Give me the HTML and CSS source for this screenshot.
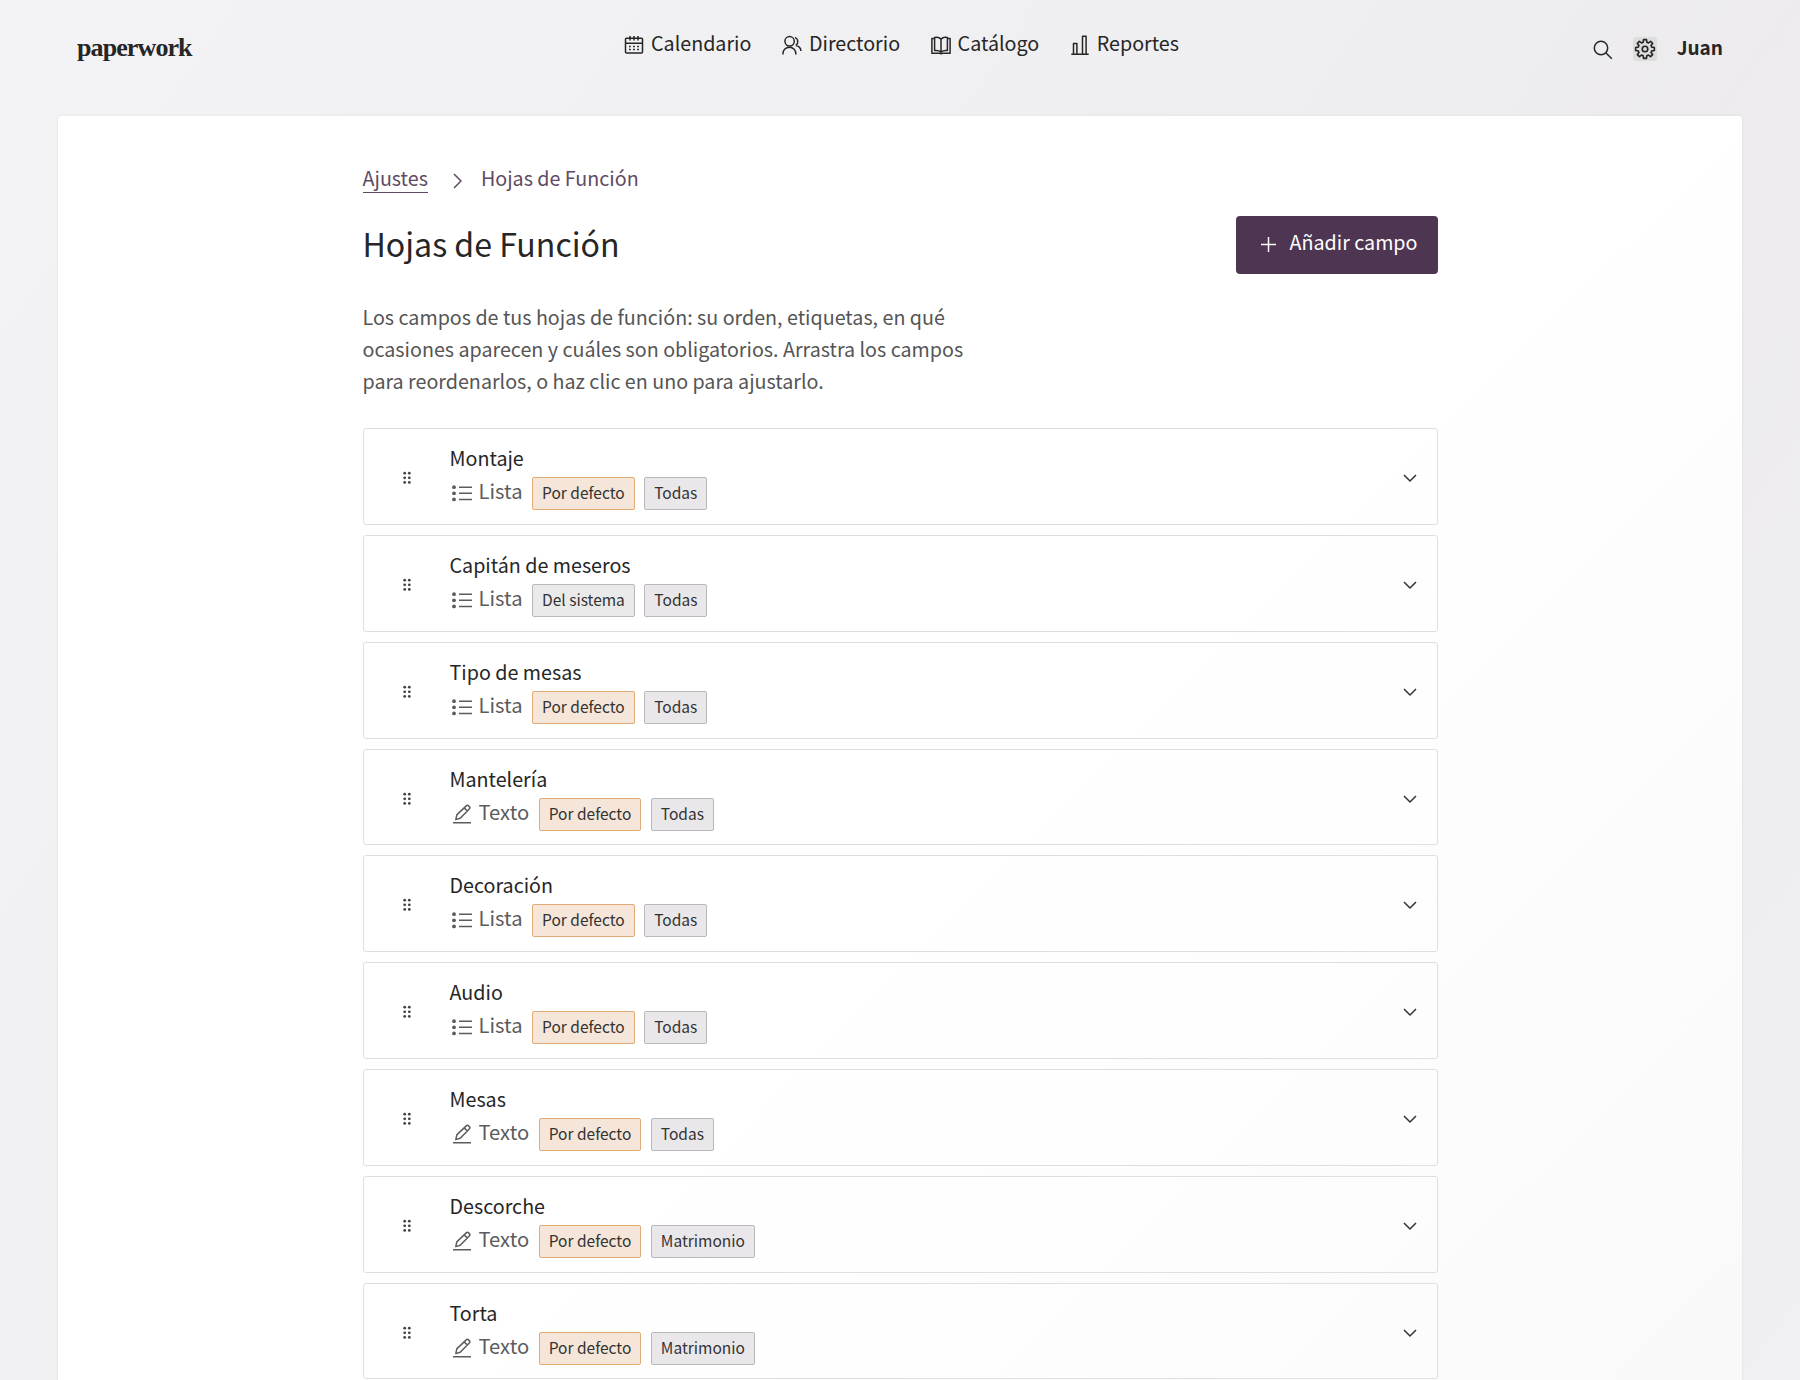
FILE: index.html
```html
<!DOCTYPE html>
<html lang="es">
<head>
    <meta charset="UTF-8">
    <meta name="viewport" content="width=device-width, initial-scale=1.0">
    <title>Hojas de Función - paperwork</title>
    <link rel="stylesheet" href="styles.css">
</head>
<body>

<svg class="sprite" xmlns="http://www.w3.org/2000/svg">
    <symbol id="i-calendar" viewBox="0 0 20 20">
        <rect x="1.5" y="3.2" width="17" height="14.8" rx="1"/>
        <path d="M1.5 8.3h17M6 1v4.4M10 1v4.4M14 1v4.4"/>
        <path d="M5 11.4h1.8M9.1 11.4h1.8M13.2 11.4H15M5 14.6h1.8M9.1 14.6h1.8M13.2 14.6H15"/>
    </symbol>
    <symbol id="i-users" viewBox="0 0 20 20">
        <circle cx="7.6" cy="6.3" r="4.7"/>
        <path d="M1 19.4v-.8a6.3 6.3 0 0 1 12.8 0v.8M13 2.4a4.4 4.4 0 0 1 .8 7.8M13.8 10.4c2.8.4 4.9 2.4 5.2 5.6"/>
    </symbol>
    <symbol id="i-book" viewBox="0 0 20 20">
        <path d="M3.6 3.4H.9V18.3H8.7L10 18.9l1.3-.6H19.1V3.4H16.4"/>
        <path d="M10 4.3C8.4 2.3 6 2 3.6 2.6V15.6c2.4-.4 4.7 0 6.4 1.5 1.7-1.5 4-1.9 6.4-1.5V2.6C14 2 11.6 2.3 10 4.3zM10 4.3v12.8"/>
    </symbol>
    <symbol id="i-chart" viewBox="0 0 20 20">
        <path d="M1.3 19.2h17.4M3.5 19.2V8.6h3.4v10.6M12.5 19.2V1.2h3.6v18"/>
    </symbol>
    <symbol id="i-search" viewBox="0 0 20 20">
        <circle cx="8" cy="8" r="6.7"/>
        <path d="M12.8 12.8l6 6"/>
    </symbol>
    <symbol id="i-gear" viewBox="0 0 24 24">
        <path d="M10 4.6 10.4 1.8h3.2L14 4.6l1.800.8 2.300-1.7 2.200 2.200-1.700 2.300.8 1.800 2.800.4v3.200l-2.800.4-.8 1.800 1.700 2.300-2.200 2.200-2.300-1.700-1.800.8-.4 2.800h-3.200L10 19.400l-1.800-.8-2.300 1.700-2.200-2.200 1.700-2.300L4.600 14l-2.800-.4v-3.200L4.600 10l.8-1.800-1.700-2.300 2.200-2.200 2.300 1.700z"/>
        <circle cx="12" cy="12" r="3"/>
    </symbol>
    <symbol id="i-list" viewBox="0 0 20 18">
        <path d="M7 3.2h13M7 9.3h13M7 15.4h13"/>
        <g class="dots"><circle cx="2" cy="3.2" r="1.9"/><circle cx="2" cy="9.3" r="1.9"/><circle cx="2" cy="15.4" r="1.9"/></g>
    </symbol>
    <symbol id="i-pen" viewBox="0 0 20 20">
        <path d="M1 18.8h18M3.8 15.6l1-4.7L14.2 1.9a1.7 1.7 0 0 1 2.4 0l.7.7a1.7 1.7 0 0 1 0 2.4L8.2 14.3zM12.2 3.9l3.1 3.1"/>
    </symbol>
    <symbol id="i-grip" viewBox="0 0 8 14">
        <g class="dots"><circle cx="1.7" cy="2.2" r="1.4"/><circle cx="6.3" cy="2.2" r="1.4"/><circle cx="1.7" cy="6.8" r="1.4"/><circle cx="6.3" cy="6.8" r="1.4"/><circle cx="1.7" cy="11.4" r="1.4"/><circle cx="6.3" cy="11.4" r="1.4"/></g>
    </symbol>
    <symbol id="i-down" viewBox="0 0 14 8">
        <path d="M1 1l6 6 6-6"/>
    </symbol>
</svg>

<header class="topbar">
    <a class="logo">paperwork</a>
    <nav class="nav">
        <a><svg><use href="#i-calendar"/></svg><span>Calendario</span></a>
        <a><svg><use href="#i-users"/></svg><span>Directorio</span></a>
        <a><svg><use href="#i-book"/></svg><span>Catálogo</span></a>
        <a><svg><use href="#i-chart"/></svg><span>Reportes</span></a>
    </nav>
    <div class="account">
        <svg class="search"><use href="#i-search"/></svg>
        <span class="settings"><svg><use href="#i-gear"/></svg></span>
        <span class="user">Juan</span>
    </div>
</header>

<main class="sheet">
    <div class="content">
        <div class="breadcrumb">
            <a>Ajustes</a>
            <svg viewBox="0 0 9 16"><path d="M1 1l7 7-7 7"/></svg>
            <span>Hojas de Función</span>
        </div>

        <div class="heading">
            <h1>Hojas de Función</h1>
            <button class="add"><svg viewBox="0 0 15 15"><path d="M7.5 0v15M0 7.5h15"/></svg><span>Añadir campo</span></button>
        </div>

        <p class="intro">Los campos de tus hojas de función: su orden, etiquetas, en qué<br>ocasiones aparecen y cuáles son obligatorios. Arrastra los campos<br>para reordenarlos, o haz clic en uno para ajustarlo.</p>

        <div class="fields">
            <div class="field">
                <svg class="grip"><use href="#i-grip"/></svg>
                <div class="info">
                    <div class="name">Montaje</div>
                    <div class="meta"><svg class="list"><use href="#i-list"/></svg><span class="type">Lista</span><span class="tag default">Por defecto</span><span class="tag">Todas</span></div>
                </div>
                <svg class="down"><use href="#i-down"/></svg>
            </div>
            <div class="field">
                <svg class="grip"><use href="#i-grip"/></svg>
                <div class="info">
                    <div class="name">Capitán de meseros</div>
                    <div class="meta"><svg class="list"><use href="#i-list"/></svg><span class="type">Lista</span><span class="tag system">Del sistema</span><span class="tag">Todas</span></div>
                </div>
                <svg class="down"><use href="#i-down"/></svg>
            </div>
            <div class="field">
                <svg class="grip"><use href="#i-grip"/></svg>
                <div class="info">
                    <div class="name">Tipo de mesas</div>
                    <div class="meta"><svg class="list"><use href="#i-list"/></svg><span class="type">Lista</span><span class="tag default">Por defecto</span><span class="tag">Todas</span></div>
                </div>
                <svg class="down"><use href="#i-down"/></svg>
            </div>
            <div class="field">
                <svg class="grip"><use href="#i-grip"/></svg>
                <div class="info">
                    <div class="name">Mantelería</div>
                    <div class="meta"><svg class="pen"><use href="#i-pen"/></svg><span class="type">Texto</span><span class="tag default">Por defecto</span><span class="tag">Todas</span></div>
                </div>
                <svg class="down"><use href="#i-down"/></svg>
            </div>
            <div class="field">
                <svg class="grip"><use href="#i-grip"/></svg>
                <div class="info">
                    <div class="name">Decoración</div>
                    <div class="meta"><svg class="list"><use href="#i-list"/></svg><span class="type">Lista</span><span class="tag default">Por defecto</span><span class="tag">Todas</span></div>
                </div>
                <svg class="down"><use href="#i-down"/></svg>
            </div>
            <div class="field">
                <svg class="grip"><use href="#i-grip"/></svg>
                <div class="info">
                    <div class="name">Audio</div>
                    <div class="meta"><svg class="list"><use href="#i-list"/></svg><span class="type">Lista</span><span class="tag default">Por defecto</span><span class="tag">Todas</span></div>
                </div>
                <svg class="down"><use href="#i-down"/></svg>
            </div>
            <div class="field">
                <svg class="grip"><use href="#i-grip"/></svg>
                <div class="info">
                    <div class="name">Mesas</div>
                    <div class="meta"><svg class="pen"><use href="#i-pen"/></svg><span class="type">Texto</span><span class="tag default">Por defecto</span><span class="tag">Todas</span></div>
                </div>
                <svg class="down"><use href="#i-down"/></svg>
            </div>
            <div class="field">
                <svg class="grip"><use href="#i-grip"/></svg>
                <div class="info">
                    <div class="name">Descorche</div>
                    <div class="meta"><svg class="pen"><use href="#i-pen"/></svg><span class="type">Texto</span><span class="tag default">Por defecto</span><span class="tag">Matrimonio</span></div>
                </div>
                <svg class="down"><use href="#i-down"/></svg>
            </div>
            <div class="field">
                <svg class="grip"><use href="#i-grip"/></svg>
                <div class="info">
                    <div class="name">Torta</div>
                    <div class="meta"><svg class="pen"><use href="#i-pen"/></svg><span class="type">Texto</span><span class="tag default">Por defecto</span><span class="tag">Matrimonio</span></div>
                </div>
                <svg class="down"><use href="#i-down"/></svg>
            </div>
        </div>
    </div>
</main>

</body>
</html>
```
FILE: styles.css
```css
* {
    box-sizing: border-box;
}
body {
    margin: 0;
    height: 1380px;
    overflow: hidden;
    font-family: "Noto Sans CJK SC", sans-serif;
    font-size: 19.7px;
    line-height: 32px;
    color: #262626;
    background: linear-gradient(125deg, #f3f3f5 0%, #f0f0f2 35%, #edebee 65%, #f0eff1 100%);
}
svg {
    fill: none;
    stroke: currentColor;
    stroke-width: 1.5;
    stroke-linejoin: round;
    flex: none;
}
.dots {
    fill: currentColor;
    stroke: none;
}
.sprite {
    display: none;
}
.topbar {
    display: grid;
    grid-template-columns: 1fr auto 1fr;
    height: 116px;
    padding: 27px 77px 0;
}
.logo {
    font-family: "Liberation Serif", serif;
    font-weight: bold;
    font-size: 26px;
    line-height: 42px;
    letter-spacing: -0.9px;
}
.nav {
    display: flex;
    gap: 30.5px;
    margin-left: 3px;
}
.nav a {
    display: flex;
    gap: 7px;
    height: 32px;
}
.nav svg {
    width: 20px;
    height: 20px;
    margin-top: 8px;
}
.account {
    display: flex;
    justify-content: flex-end;
}
.search {
    width: 20px;
    height: 20px;
    margin: 13px 20px 0 0;
}
.settings {
    display: flex;
    align-items: center;
    justify-content: center;
    width: 24px;
    height: 24px;
    margin: 10px 20px 0 0;
    background: #dddddd;
    border-radius: 3px;
}
.settings svg {
    width: 22px;
    height: 22px;
    stroke-width: 1.8;
}
.user {
    font-size: 19px;
    font-weight: bold;
    margin-top: 4px;
}
.sheet {
    width: 1684px;
    height: 1300px;
    margin: 0 auto;
    padding-top: 46px;
    background: linear-gradient(135deg, #fff 0%, #fff 55%, #f9f9fa 100%);
    border-radius: 4px;
    box-shadow: 0 0 3px rgba(0, 0, 0, 0.08);
}
.content {
    width: 1075px;
    margin: 0 auto;
}
.breadcrumb {
    display: flex;
    height: 32px;
    color: #5f4a63;
}
.breadcrumb a {
    height: 31px;
    border-bottom: 1px solid #5f4a63;
}
.breadcrumb svg {
    width: 9px;
    height: 16px;
    margin: 11px 19px 0 25px;
}
.heading {
    display: flex;
    justify-content: space-between;
    margin-top: 22px;
}
h1 {
    margin: 4px 0 0;
    font-size: 32.1px;
    font-weight: normal;
    line-height: 46px;
}
.add {
    display: flex;
    width: 202px;
    height: 58px;
    padding: 10px 0 0 25px;
    gap: 14px;
    font: inherit;
    color: #fff;
    background: #4e3551;
    border: 0;
    border-radius: 4px;
}
.add svg {
    width: 15px;
    height: 15px;
    margin-top: 11px;
}
.intro {
    margin: 26.5px 0 30.5px;
    line-height: 32.4px;
    color: #555;
}
.fields {
    display: flex;
    flex-direction: column;
    gap: 10px;
}
.field {
    display: flex;
    height: 96.8px;
    flex: none;
    padding: 11px 20px 0 38px;
    background: rgba(255, 255, 255, 0.4);
    border: 1px solid #dfdfe1;
    border-radius: 3px;
}
.grip {
    width: 8px;
    height: 14px;
    margin: 31px 39px 0 1px;
    color: #444;
}
.info {
    flex: 1;
    margin-top: 2px;
}
.meta {
    display: flex;
    height: 34px;
    margin-top: 3px;
    color: #5c5c5c;
}
.meta .list {
    width: 20px;
    height: 18px;
    margin: 7px 7px 0 2px;
}
.meta .pen {
    width: 20px;
    height: 20px;
    margin: 6px 7px 0 2px;
}
.type {
    font-size: 20.2px;
    margin-top: -2px;
}
.tag {
    height: 33px;
    margin-left: 9.5px;
    padding: 0 9px;
    font-size: 15.5px;
    line-height: 28px;
    color: #333;
    background: #eae7eb;
    border: 1px solid #b9b7ba;
    border-radius: 2px;
}
.tag.default {
    background: #f5e6d9;
    border-color: #e0ab74;
}
.tag.system {
    background: #eaeaea;
    border-color: #b9b9b9;
}
.down {
    width: 14px;
    height: 8px;
    margin-top: 34px;
    color: #333;
}
```
